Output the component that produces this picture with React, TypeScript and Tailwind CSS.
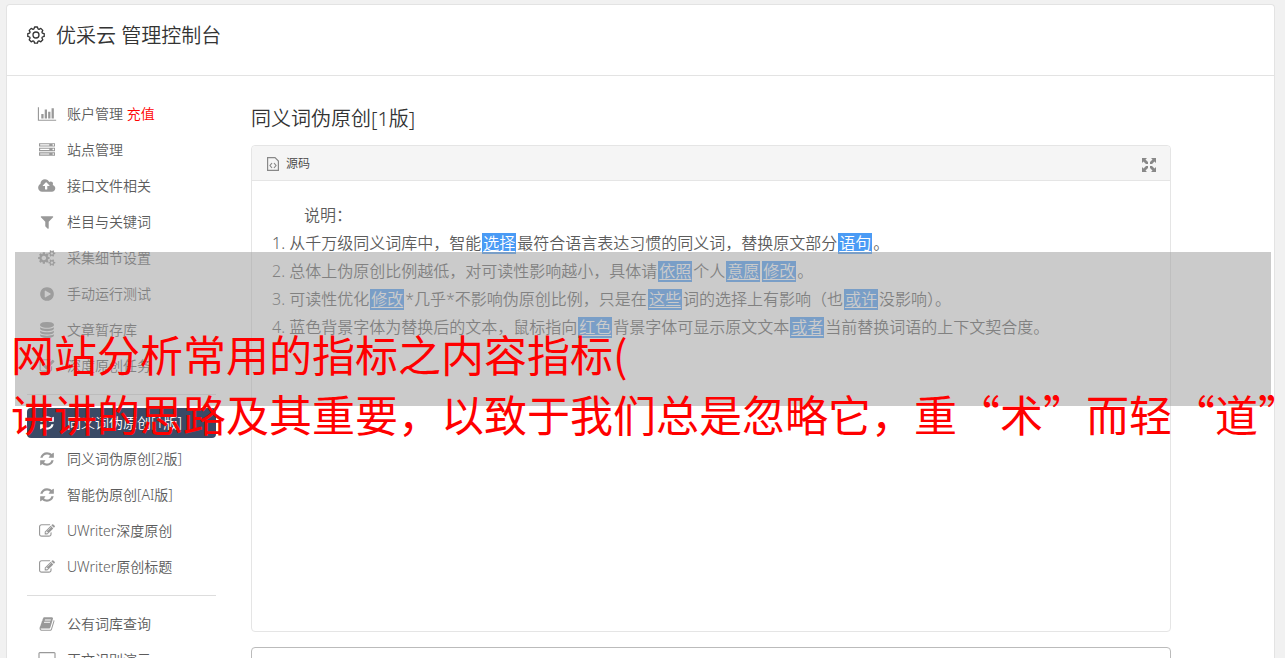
import React from "react";

const icons = {
  chart: {
    w: 2048,
    d: "M640 896v512h-256v-512h256zm384-512v1024h-256v-1024h256zm1024 1152v128h-2048v-1536h128v1408h1920zm-640-896v768h-256v-768h256zm384-384v1152h-256v-1152h256z",
  },
  server: {
    w: 1792,
    d: "M128 1408h1024v-128h-1024v128zm0-512h1024v-128h-1024v128zm1568 448q0-40-28-68t-68-28-68 28-28 68 28 68 68 28 68-28 28-68zm-1568-960h1024v-128h-1024v128zm1568 448q0-40-28-68t-68-28-68 28-28 68 28 68 68 28 68-28 28-68zm0-512q0-40-28-68t-68-28-68 28-28 68 28 68 68 28 68-28 28-68zm96 832v384h-1792v-384h1792zm0-512v384h-1792v-384h1792zm0-512v384h-1792v-384h1792z",
  },
  cloud: {
    w: 1856,
    d: "M1216 864q0-14-9-23l-352-352q-9-9-23-9t-23 9l-351 351q-10 12-10 24 0 14 9 23t23 9h224v352q0 13 9.500 22.500t22.500 9.500h192q13 0 22.500-9.500t9.500-22.500v-352h224q13 0 22.500-9.500t9.500-22.500zm640 288q0 159-112.500 271.500t-271.500 112.500h-1088q-185 0-316.500-131.500t-131.500-316.500q0-130 70-240t188-165q-2-30-2-43 0-212 150-362t362-150q156 0 285.500 87t188.500 231q71-62 166-62 106 0 181 75t75 181q0 76-41 138 130 31 213.500 135.500t83.500 238.500z",
  },
  filter: {
    w: 1408,
    d: "M1403 295q17 41-14 70l-493 493v742q0 42-39 59-13 5-25 5-27 0-45-19l-256-256q-19-19-19-45v-486l-493-493q-31-29-14-70 17-39 59-39h1280q42 0 59 39z",
  },
  cogs: {
    w: 1856,
    d: "M832 896q0-106-75-181t-181-75-181 75-75 181 75 181 181 75 181-75 75-181zm768 512q0-52-38-90t-90-38-90 38-38 90q0 53 37.500 90.500t90.500 37.500 90.500-37.500 37.500-90.500zm0-1024q0-52-38-90t-90-38-90 38-38 90q0 53 37.500 90.500t90.500 37.500 90.500-37.500 37.500-90.500zm-384 421v185q0 10-7 19.500t-16 10.500l-155 24q-11 35-32 76 34 48 90 115 7 11 7 20 0 12-7 19-23 30-82.500 89.500t-78.500 59.500q-11 0-21-7l-115-90q-37 19-77 31-11 108-23 155-7 24-30 24h-186q-11 0-20-7.500t-10-17.500l-23-153q-34-10-75-31l-118 89q-7 7-20 7-11 0-21-8-144-133-144-160 0-9 7-19 10-14 41-53t47-61q-23-44-35-82l-152-24q-10-1-17-9.500t-7-19.500v-185q0-10 7-19.500t16-10.500l155-24q11-35 32-76-34-48-90-115-7-11-7-20 0-12 7-20 22-30 82-89t79-59q11 0 21 7l115 90q34-18 77-32 11-108 23-154 7-24 30-24h186q11 0 20 7.500t10 17.500l23 153q34 10 75 31l118-89q8-7 20-7 11 0 21 8 144 133 144 160 0 8-7 19-12 16-42 54t-45 60q23 48 34 82l152 23q10 2 17 10.500t7 19.500zm640 533v140q0 16-149 31-12 27-30 52 51 113 51 138 0 4-4 7-122 71-124 71-8 0-46-47t-52-68q-20 2-30 2t-30-2q-14 21-52 68t-46 47q-2 0-124-71-4-3-4-7 0-25 51-138-18-25-30-52-149-15-149-31v-140q0-16 149-31 13-29 30-52-51-113-51-138 0-4 4-7 4-2 35-20t59-34 30-16q8 0 46 46.500t52 67.500q20-2 30-2t30 2q51-71 92-112l6-2q4 0 124 70 4 3 4 7 0 25-51 138 17 23 30 52 149 15 149 31zm0-1024v140q0 16-149 31-12 27-30 52 51 113 51 138 0 4-4 7-122 71-124 71-8 0-46-47t-52-68q-20 2-30 2t-30-2q-14 21-52 68t-46 47q-2 0-124-71-4-3-4-7 0-25 51-138-18-25-30-52-149-15-149-31v-140q0-16 149-31 13-29 30-52-51-113-51-138 0-4 4-7 4-2 35-20t59-34 30-16q8 0 46 46.500t52 67.500q20-2 30-2t30 2q51-71 92-112l6-2q4 0 124 70 4 3 4 7 0 25-51 138 17 23 30 52 149 15 149 31z",
  },
  play: {
    w: 1536,
    d: "M768 128q209 0 385.500 103t279.500 279.500 103 385.500-103 385.500-279.500 279.500-385.500 103-385.500-103-279.500-279.500-103-385.500 103-385.500 279.500-279.500 385.500-103zm384 823q32-18 32-55t-32-55l-544-320q-31-19-64-1-32 19-32 56v640q0 37 32 56 16 8 32 8 17 0 32-9z",
  },
  database: {
    w: 1536,
    d: "M768 768q237 0 443-43t325-127v170q0 69-103 128t-280 93.500-385 34.500-385-34.500-280-93.500-103-128v-170q119 84 325 127t443 43zm0 768q237 0 443-43t325-127v170q0 69-103 128t-280 93.500-385 34.500-385-34.500-280-93.500-103-128v-170q119 84 325 127t443 43zm0-384q237 0 443-43t325-127v170q0 69-103 128t-280 93.500-385 34.500-385-34.500-280-93.500-103-128v-170q119 84 325 127t443 43zm0-1152q208 0 385 34.500t280 93.500 103 128v128q0 69-103 128t-280 93.500-385 34.500-385-34.500-280-93.500-103-128v-128q0-69 103-128t280-93.500 385-34.500z",
  },
  check: {
    w: 1664,
    d: "M1408 930v318q0 119-84.500 203.500t-203.500 84.500h-832q-119 0-203.500-84.500t-84.500-203.500v-832q0-119 84.500-203.500t203.500-84.500h832q63 0 117 25 15 7 18 23 3 17-9 29l-49 49q-10 10-23 10-3 0-9-2-23-6-45-6h-832q-66 0-113 47t-47 113v832q0 66 47 113t113 47h832q66 0 113-47t47-113v-254q0-13 9-22l64-64q10-10 23-10 6 0 12 3 20 8 20 29zm231-489l-814 814q-24 24-57 24t-57-24l-430-430q-24-24-24-57t24-57l110-110q24-24 57-24t57 24l263 263 647-647q24-24 57-24t57 24l110 110q24 24 24 57t-24 57z",
  },
  refresh: {
    w: 1536,
    d: "M1511 1056q0 5-1 7-64 268-268 434.500t-478 166.500q-146 0-282.500-55t-243.500-157l-129 129q-19 19-45 19t-45-19-19-45v-448q0-26 19-45t45-19h448q26 0 45 19t19 45-19 45l-137 137q71 66 161 102t187 36q134 0 250-65t186-179q11-17 53-117 8-23 30-23h192q13 0 22.500 9.500t9.500 22.500zm25-800v448q0 26-19 45t-45 19h-448q-26 0-45-19t-19-45 19-45l138-138q-148-137-349-137-134 0-250 65t-186 179q-11 17-53 117-8 23-30 23h-199q-13 0-22.500-9.500t-9.500-22.500v-7q65-268 270-434.500t480-166.500q146 0 284 55.500t245 156.500l130-129q19-19 45-19t45 19 19 45z",
  },
  edit: {
    w: 1792,
    d: "M888 1184l116-116-152-152-116 116v56h96v96h56zm440-720q-16-16-33 1l-350 350q-17 17-1 33t33-1l350-350q17-17 1-33zm80 594v190q0 119-84.500 203.500t-203.500 84.500h-832q-119 0-203.500-84.500t-84.500-203.500v-832q0-119 84.500-203.500t203.500-84.500h832q63 0 117 25 15 7 18 23 3 17-9 29l-49 49q-14 14-32 8-23-6-45-6h-832q-66 0-113 47t-47 113v832q0 66 47 113t113 47h832q66 0 113-47t47-113v-126q0-13 9-22l64-64q15-15 35-7t20 29zm-96-738l288 288-672 672h-288v-288zm444 132l-92 92-288-288 92-92q28-28 68-28t68 28l152 152q28 28 28 68t-28 68z",
  },
  book: {
    w: 1664,
    d: "M1639 478q40 57 18 129l-275 906q-19 64-76.500 107.500t-122.500 43.500h-923q-77 0-148.500-53.500t-99.500-131.500q-24-67-2-127 0-4 3-27t4-37q1-8-3-21.500t-3-19.500q2-11 8-21t16.500-23.500 16.500-23.500q23-38 45-91.500t30-91.500q3-10 .5-30t-.5-28q3-11 17-28t17-23q21-36 42-92t25-90q1-9-2.500-32t.5-28q4-13 22-30.500t22-22.500q19-26 42.500-84.500t27.500-96.500q1-8-3-25.500t-2-26.500q2-8 9-18t18-23 17-21q8-12 16.500-30.500t15-35 16-36 19.500-32 26.500-23.500 36-11.500 47.500 5.500l-1 3q38-9 51-9h761q74 0 114 56t18 130l-274 906q-36 119-71.500 153.500t-128.500 34.500h-869q-27 0-38 15-11 16-1 43 24 70 144 70h923q29 0 56-15.500t35-41.500l300-987q7-22 5-57 38 15 59 43zm-1064 2q-4 13 2 22.500t20 9.500h608q13 0 25.500-9.500t16.500-22.500l21-64q4-13-2-22.500t-20-9.500h-608q-13 0-25.500 9.500t-16.500 22.500zm-83 256q-4 13 2 22.500t20 9.500h608q13 0 25.500-9.500t16.500-22.500l21-64q4-13-2-22.500t-20-9.500h-608q-13 0-25.500 9.500t-16.500 22.500z",
  },
  desktop: {
    w: 1920,
    d: "M1792 992v-832q0-13-9.500-22.500t-22.500-9.500h-1600q-13 0-22.500 9.500t-9.500 22.500v832q0 13 9.500 22.500t22.500 9.500h1600q13 0 22.500-9.500t9.500-22.500zm128-832v1088q0 66-47 113t-113 47h-544q0 37 16 77.500t32 71 16 43.500q0 26-19 45t-45 19h-512q-26 0-45-19t-19-45q0-14 16-44t32-70 16-78h-544q-66 0-113-47t-47-113v-1088q0-66 47-113t113-47h1600q66 0 113 47t47 113z",
  },
};

type IconName = keyof typeof icons;

interface MenuItem {
  icon: IconName;
  label: string;
  extra?: string;
  active?: boolean;
}

const groups: MenuItem[][] = [
  [
    {icon: "chart", label: "账户管理", extra: "充值"},
    {icon: "server", label: "站点管理"},
    {icon: "cloud", label: "接口文件相关"},
    {icon: "filter", label: "栏目与关键词"},
    {icon: "cogs", label: "采集细节设置"},
    {icon: "play", label: "手动运行测试"},
    {icon: "database", label: "文章暂存库"},
    {icon: "check", label: "深度原创任务"},
  ],
  [
    {icon: "refresh", label: "同义词伪原创[1版]", active: true},
    {icon: "refresh", label: "同义词伪原创[2版]"},
    {icon: "refresh", label: "智能伪原创[AI版]"},
    {icon: "edit", label: "UWriter深度原创"},
    {icon: "edit", label: "UWriter原创标题"},
  ],
  [
    {icon: "book", label: "公有词库查询"},
    {icon: "desktop", label: "正文识别演示"},
  ],
];

const Icon = ({name}: {name: IconName}) => (
  <svg viewBox={`0 0 ${icons[name].w} 1792`} className="h-4 w-5 shrink-0" fill="currentColor" aria-hidden="true">
    <path d={icons[name].d} />
  </svg>
);

const GearIcon = () => (
  <svg viewBox="0 0 18 18" className="size-[18px] shrink-0" fill="none" stroke="currentColor" strokeWidth="1.3" aria-hidden="true">
    <circle cx="9" cy="9" r="3" />
    <path d="M7.600 1h2.800l.6 1.900 1 .4 1.800-.9 2 2-.9 1.700.4 1 1.900.5v2.800l-1.900.6-.4 1 .9 1.800-2 2-1.800-.9-1 .4-.6 1.900H7.600L7 15.300l-1-.4-1.800.9-2-2 .9-1.800-.4-1-1.900-.6V7.600l1.900-.5.4-1-.9-1.700 2-2 1.800.9 1-.4z" strokeLinejoin="round" />
  </svg>
);

const Swap = ({children}: {children: React.ReactNode}) => (
  <span className="mx-px inline-block h-[21px] bg-[#4a9bf5] px-px leading-[21px] text-white underline underline-offset-2">{children}</span>
);

const Sidebar = () => (
  <nav className="w-[189px] shrink-0">
    {groups.map((group, i) => (
      <ul key={i} className={i > 0 ? "mt-[13px] flex flex-col gap-1.5 border-t border-[#ddd] pt-[13px]" : "flex flex-col gap-1.5"}>
        {group.map((item) => (
          <li key={item.label}>
            <a
              href="#"
              className={
                item.active
                  ? "flex h-[30px] items-center gap-2.5 rounded-sm bg-[#3a4a66] px-2.5 text-sm text-white"
                  : "flex h-[30px] items-center gap-2.5 px-2.5 text-sm text-[#5c5c5c]"
              }
            >
              <span className={item.active ? "flex" : "flex text-[#999]"}>
                <Icon name={item.icon} />
              </span>
              <span className="whitespace-nowrap">
                {item.label}
                {item.extra && <span className="text-[#f00]"> {item.extra}</span>}
              </span>
            </a>
          </li>
        ))}
      </ul>
    ))}
  </nav>
);

const Editor = () => (
  <section className="h-[487px] rounded border border-[#e5e5e5]">
    <div className="flex h-[35px] items-center justify-between rounded-t border-b border-[#e5e5e5] bg-[#f5f5f5] pt-0.5 pr-3.5 pl-[15px]">
      <button className="flex items-center gap-[7px] text-xs text-[#444]">
        <svg viewBox="0 0 12 14" className="h-3.5 w-3" fill="none" stroke="#888" strokeWidth="1.2" aria-hidden="true">
          <path d="M.6.6h7.400l3.400 3.400v9.400H.6zM5 6L3 8.500 5 11M7 6l2 2.500L7 11" />
        </svg>
        源码
      </button>
      <button aria-label="全屏" className="pt-0.5">
        <svg viewBox="0 0 14 14" className="size-3.5" fill="#888" aria-hidden="true">
          <path d="M0 0h5L3.500 1.500 6 4v2H4L1.500 3.500 0 5zM14 0v5l-1.500-1.500L10 6H8V4l2.500-2.500L9 0zM0 14V9l1.500 1.500L4 8h2v2l-2.500 2.500L5 14zM14 14H9l1.500-1.500L8 10V8h2l2.500 2.500L14 9z" />
        </svg>
      </button>
    </div>
    <div className="px-5 pt-5 text-base leading-7 text-[#5c5c5c]">
      <p className="indent-8">说明：</p>
      <ol className="list-inside list-decimal">
        <li>从千万级同义词库中，智能<Swap>选择</Swap>最符合语言表达习惯的同义词，替换原文部分<Swap>语句</Swap>。</li>
        <li>总体上伪原创比例越低，对可读性影响越小，具体请<Swap>依照</Swap>个人<Swap>意愿</Swap><Swap>修改</Swap>。</li>
        <li>可读性优化<Swap>修改</Swap>*几乎*不影响伪原创比例，只是在<Swap>这些</Swap>词的选择上有影响（也<Swap>或许</Swap>没影响）。</li>
        <li>蓝色背景字体为替换后的文本，鼠标指向<Swap>红色</Swap>背景字体可显示原文文本<Swap>或者</Swap>当前替换词语的上下文契合度。</li>
      </ol>
    </div>
  </section>
);

const App = () => (
  <div className="relative h-screen overflow-hidden bg-[#f1f1f1] px-1.5 pt-1 font-['Noto_Sans','Noto_Sans_CJK_SC',sans-serif] font-[350]">
    <div className="mr-1 min-h-full rounded border-x border-t border-[#e3e3e3] bg-white">
      <header className="flex h-[71px] items-start gap-[11px] border-b border-[#e3e3e3] px-5 pt-4 text-[#333]">
        <span className="flex h-7 items-center">
          <GearIcon />
        </span>
        <h1 className="text-xl leading-[30px]">优采云 管理控制台</h1>
      </header>
      <div className="flex gap-[35px] pt-[23px] pl-5">
        <Sidebar />
        <main className="mr-[103px] min-w-0 flex-1">
          <h2 className="mt-[5px] mb-[11px] text-xl leading-[30px] text-[#333]">同义词伪原创[1版]</h2>
          <Editor />
          <textarea aria-label="结果" className="mt-[15px] block h-40 w-full resize-none rounded-sm border border-[#bbb] bg-white" />
        </main>
      </div>
    </div>
    <div className="absolute top-[252px] right-3.5 left-[15px] h-[154px] bg-[#a0a0a0]/55" />
    <p className="absolute top-[323px] left-[11px] font-['Noto_Sans_CJK_SC',sans-serif] text-[43px] leading-[60px] font-normal whitespace-nowrap text-[#f00]">
      网站分析常用的指标之内容指标(
      <br />
      讲讲的思路及其重要，以致于我们总是忽略它，重“术”而轻“道”
    </p>
  </div>
);

export default App;
